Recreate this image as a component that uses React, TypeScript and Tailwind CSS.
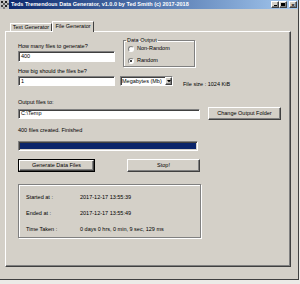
import React from "react";

const sunken =
  "border border-t-[#808080] border-l-[#808080] border-b-white border-r-white shadow-[inset_1px_1px_0_#404040]";
const raised =
  "border border-t-white border-l-white border-b-[#404040] border-r-[#404040] shadow-[inset_-1px_-1px_0_#808080]";

function Radio({ checked, label }: { checked?: boolean; label: string }) {
  return (
    <div className="flex items-center h-[7px]">
      <span className="w-[6px] h-[6px] rounded-full bg-white border border-t-[#808080] border-l-[#808080] border-b-white border-r-white shadow-[0_0_0_0.5px_#d4d0c8] flex items-center justify-center">
        {checked && <span className="w-[2px] h-[2px] rounded-full bg-black" />}
      </span>
      <span className="ml-[3px]">{label}</span>
    </div>
  );
}

export default function App() {
  return (
    <div
      className="w-[300px] h-[284px] bg-[#ecebe7] text-black text-[5.5px] leading-[7px]"
      style={{ fontFamily: '"Liberation Sans", Arial, sans-serif' }}
    >
      <div className="w-[299px] h-[280px] bg-[#d4d0c8] border-r border-b border-r-[#404040] border-b-[#404040] flex flex-col">
        {/* Title bar */}
        <div className="h-[9px] bg-gradient-to-r from-[#0a246a] to-[#a6caf0] flex items-center">
          <svg width="9" height="9" viewBox="0 0 9 9" className="shrink-0">
            <rect x="0" y="0" width="9" height="9" fill="#c0c0c0" />
            <rect x="1" y="1" width="2" height="2" fill="#202020" />
            <rect x="5" y="1" width="2" height="2" fill="#202020" />
            <rect x="3" y="3" width="2" height="2" fill="#606060" />
            <rect x="7" y="3" width="2" height="2" fill="#606060" />
            <rect x="1" y="5" width="2" height="2" fill="#404040" />
            <rect x="5" y="5" width="2" height="2" fill="#202020" />
            <rect x="3" y="7" width="2" height="2" fill="#808080" />
          </svg>
          <span className="ml-[2px] text-white font-bold whitespace-nowrap">
            Teds Tremendous Data Generator, v1.0.0 by Ted Smith (c) 2017-2018
          </span>
          <div className="ml-auto flex items-center mr-[1px]">
            <div className={`w-[8px] h-[7px] bg-[#d4d0c8] ${raised} flex items-end justify-center`}>
              <span className="block w-[3px] h-[1px] bg-black mb-[1px]" />
            </div>
            <div className={`w-[8px] h-[7px] bg-[#d4d0c8] ${raised} flex items-center justify-center`}>
              <span className="block w-[4px] h-[3px] border border-black border-t-2" />
            </div>
            <div className={`ml-[2px] w-[8px] h-[7px] bg-[#d4d0c8] ${raised} flex items-center justify-center text-[6px] leading-none font-bold`}>
              ×
            </div>
          </div>
        </div>

        {/* Tabs */}
        <div className="mt-[12px] pl-[10px] flex items-end h-[10px] relative z-10">
          <div className="w-[42px] h-[8px] border-t border-l border-r border-t-white border-l-white border-r-[#404040] flex items-center justify-center whitespace-nowrap">
            Text Generator
          </div>
          <div className="w-[42px] h-[11px] -mb-[1px] bg-[#d4d0c8] border-t border-l border-r border-t-white border-l-white border-r-[#404040] flex items-center justify-center whitespace-nowrap pb-[1px]">
            File Generator
          </div>
        </div>

        {/* Panel */}
        <div className="ml-[5px] w-[286px] h-[236px] border border-t-white border-l-white border-b-[#404040] border-r-[#404040] shadow-[inset_-1px_-1px_0_#808080] pl-[12px] pt-[5px] flex flex-col">
          {/* Row A */}
          <div className="flex items-start">
            <div className="w-[97px] pt-[6px] flex flex-col">
              <div className="h-[8px]">How many files to generate?</div>
              <div className={`h-[11px] bg-white ${sunken} pl-[2px] flex items-center`}>400</div>
            </div>
            <fieldset className="ml-[8px] w-[72px] h-[30px] border border-[#808080] shadow-[inset_1px_1px_0_#fff,1px_1px_0_#fff] px-[4px]">
              <legend className="px-[1px] ml-[-2px] leading-[6px]">Data Output</legend>
              <div className="mt-[2px] flex flex-col gap-[5px]">
                <Radio label="Non-Random" />
                <Radio checked label="Random" />
              </div>
            </fieldset>
          </div>

          {/* Row B */}
          <div className="mt-[1px] h-[8px]">How big should the files be?</div>
          <div className="flex items-end">
            <div className={`w-[97px] h-[10px] bg-white ${sunken} pl-[2px] flex items-center`}>1</div>
            <div className={`ml-[5px] w-[53px] h-[10px] bg-white ${sunken} pl-[1px] flex items-center`}>
              <span className="flex-1 whitespace-nowrap">Megabytes (Mb)</span>
              <span className={`w-[7px] h-[8px] bg-[#d4d0c8] ${raised} flex items-center justify-center`}>
                <svg width="4" height="3" viewBox="0 0 4 3">
                  <path d="M0 0 H4 L2 2.5 Z" fill="#000" />
                </svg>
              </span>
            </div>
            <div className="ml-[10px] whitespace-nowrap leading-[6px] mb-[-1px]">File size : 1024 KiB</div>
          </div>

          {/* Row C */}
          <div className="mt-[13px] h-[8px]">Output files to:</div>
          <div className="flex items-center">
            <div className={`w-[182px] h-[10px] bg-white ${sunken} pl-[2px] flex items-center`}>C:\Temp</div>
            <div className={`ml-[8px] w-[73px] h-[13px] bg-[#d4d0c8] ${raised} flex items-center justify-center whitespace-nowrap`}>
              Change Output Folder
            </div>
          </div>

          <div className="mt-[7px] h-[7px]">400 files created. Finished</div>
          <div className={`mt-[7px] w-[180px] h-[10px] ${sunken} p-[1px]`}>
            <div className="w-full h-full bg-[#0a246a]" />
          </div>

          {/* Buttons */}
          <div className="mt-[8px] flex">
            <div className="w-[77px] h-[13px] border border-black">
              <div className={`w-full h-full bg-[#d4d0c8] ${raised} flex items-center justify-center whitespace-nowrap`}>
                Generate Data Files
              </div>
            </div>
            <div className={`ml-[32px] w-[73px] h-[13px] bg-[#d4d0c8] ${raised} flex items-center justify-center`}>
              Stop!
            </div>
          </div>

          {/* Info group */}
          <div className="mt-[12px] w-[183px] h-[54px] border border-[#808080] shadow-[inset_1px_1px_0_#fff,1px_1px_0_#fff] pl-[7px] pt-[9px] flex flex-col gap-[9px]">
            <div className="flex h-[7px]">
              <span className="w-[54px]">Started at :</span>
              <span>2017-12-17 13:55:39</span>
            </div>
            <div className="flex h-[7px]">
              <span className="w-[54px]">Ended at :</span>
              <span>2017-12-17 13:55:49</span>
            </div>
            <div className="flex h-[7px] whitespace-nowrap">
              <span className="w-[54px]">Time Taken :</span>
              <span>0 days 0 hrs, 0 min, 9 sec, 129 ms</span>
            </div>
          </div>
        </div>
      </div>
    </div>
  );
}
